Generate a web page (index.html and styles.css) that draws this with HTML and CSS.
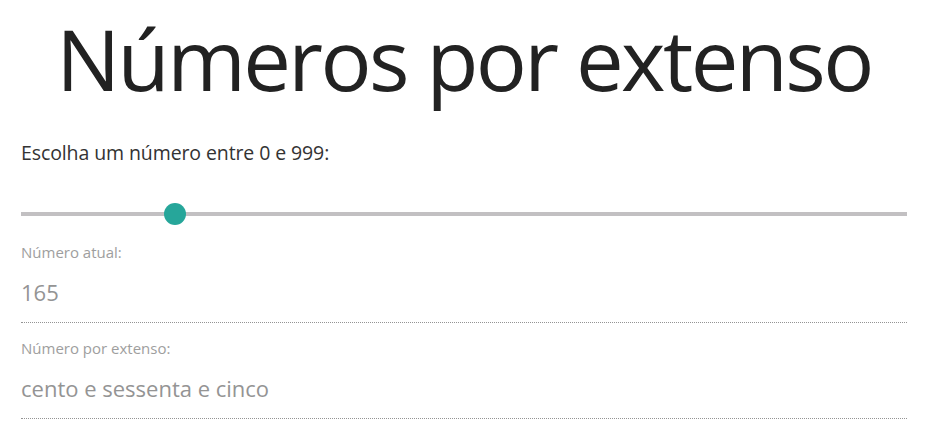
FILE: index.html
```html
<!DOCTYPE html>
<html lang="pt">
<head>
<meta charset="utf-8">
<title>Números por extenso</title>
<link rel="stylesheet" href="styles.css">
</head>
<body>
<main class="container">
  <h1 class="title">Números por extenso</h1>
  <label class="prompt" for="numero">Escolha um número entre 0 e 999:</label>
  <input class="slider" id="numero" type="range" min="0" max="999" value="165">
  <div class="field">
    <label class="field-label">Número atual:</label>
    <div class="field-value">165</div>
  </div>
  <div class="field">
    <label class="field-label">Número por extenso:</label>
    <div class="field-value">cento e sessenta e cinco</div>
  </div>
</main>
</body>
</html>
```

FILE: styles.css
```css
html, body {
  margin: 0;
  padding: 0;
  background: #ffffff;
}

body {
  font-family: "Open Sans", "Noto Sans", sans-serif;
  color: rgba(0, 0, 0, 0.87);
}

.container {
  padding: 0 22px 0 21px;
  display: flex;
  flex-direction: column;
}

.title {
  margin: 0;
  padding-top: 16px;
  font-size: 85px;
  line-height: 85px;
  font-weight: 400;
  text-align: center;
  letter-spacing: -2.6px;
  color: #222222;
}

.prompt {
  display: block;
  margin-top: 38px;
  font-size: 19.5px;
  line-height: 28px;
  color: #333333;
  letter-spacing: -0.1px;
}

.slider {
  -webkit-appearance: none;
  appearance: none;
  display: block;
  width: 100%;
  height: 22px;
  margin: 36px 0 0 0;
  padding: 0;
  background: transparent;
  outline: none;
}

.slider::-webkit-slider-runnable-track {
  height: 4px;
  background: #c2c0c2;
  border: none;
}

.slider::-webkit-slider-thumb {
  -webkit-appearance: none;
  appearance: none;
  width: 22px;
  height: 22px;
  margin-top: -9px;
  border: none;
  border-radius: 50%;
  background: #26a69a;
}

.slider::-moz-range-track {
  height: 4px;
  background: #c2c0c2;
}

.slider::-moz-range-thumb {
  width: 22px;
  height: 22px;
  border: none;
  border-radius: 50%;
  background: #26a69a;
}

.field {
  display: flex;
  flex-direction: column;
  margin-top: 17px;
}

.field + .field {
  margin-top: 15px;
}

.field-label {
  font-size: 15px;
  line-height: 20px;
  color: #9e9e9e;
}

.field-value {
  margin-top: 15px;
  padding-bottom: 15px;
  font-size: 22px;
  line-height: 30px;
  color: #949494;
  border-bottom: 1px dotted rgba(0, 0, 0, 0.42);
}
```
